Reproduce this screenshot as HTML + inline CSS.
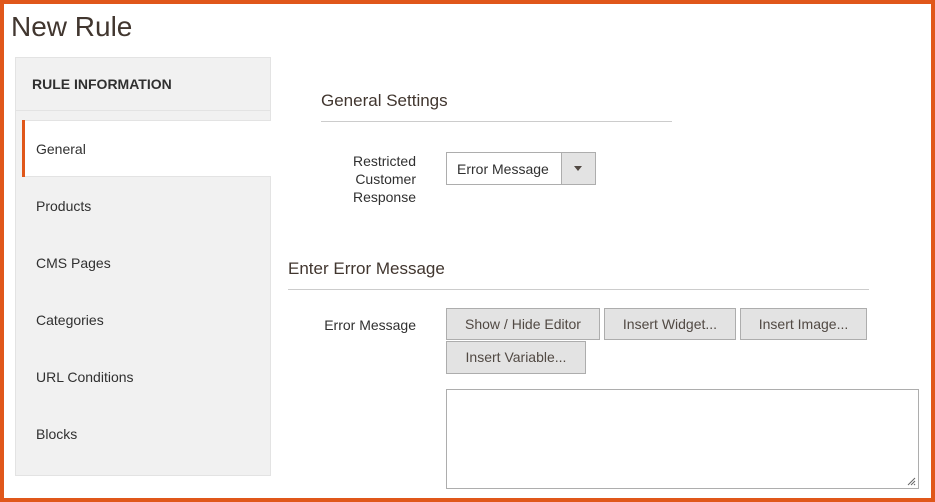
<!DOCTYPE html>
<html><head><style>
*{box-sizing:border-box;margin:0;padding:0}
body{width:935px;height:502px;overflow:hidden;background:#fff;font-family:"Liberation Sans",sans-serif;color:#303030;position:relative}
.frame{position:absolute;left:0;top:0;width:935px;height:502px;border:4px solid #e0571a;z-index:5;pointer-events:none}
.a{position:absolute}
h1{position:absolute;left:11px;top:11px;font-size:28px;font-weight:normal;color:#41362f}
.side{left:15px;top:57px;width:256px;height:419px;background:#f1f1f1;border:1px solid #e3e3e3}
.item{position:absolute;left:36px;font-size:14px;color:#303030}
.btn{position:absolute;height:32px;background:#e3e3e3;border:1px solid #adadad;font-size:14px;color:#514943;text-align:center;line-height:30px}
.lab{position:absolute;font-size:14px;text-align:right;color:#303030}
</style></head><body>
<div class="frame"></div>
<h1>New Rule</h1>
<div class="a side"></div>
<div class="a" style="left:16px;top:110px;width:254px;height:1px;background:#e3e3e3"></div>
<div class="a" style="left:32px;top:76px;font-size:14px;font-weight:bold;color:#303030">RULE INFORMATION</div>
<div class="a" style="left:22px;top:120px;width:249px;height:57px;background:#fff;border-top:1px solid #e3e3e3;border-bottom:1px solid #e3e3e3"></div>
<div class="a" style="left:22px;top:120px;width:3px;height:57px;background:#e0571a"></div>
<div class="item" style="top:141px">General</div>
<div class="item" style="top:198px">Products</div>
<div class="item" style="top:255px">CMS Pages</div>
<div class="item" style="top:312px">Categories</div>
<div class="item" style="top:369px">URL Conditions</div>
<div class="item" style="top:426px">Blocks</div>

<div class="a" style="left:321px;top:91px;font-size:17px;color:#41362f">General Settings</div>
<div class="a" style="left:321px;top:121px;width:351px;height:1px;background:#ccc"></div>
<div class="lab" style="left:300px;width:116px;top:152px;line-height:18px">Restricted<br>Customer<br>Response</div>
<div class="a" style="left:446px;top:152px;width:150px;height:33px;border:1px solid #adadad;background:#fff"></div>
<div class="a" style="left:561px;top:153px;width:34px;height:31px;background:#e3e3e3;border-left:1px solid #adadad"></div>
<div class="a" style="left:574px;top:166px;width:0;height:0;border-left:4px solid transparent;border-right:4px solid transparent;border-top:5px solid #514943"></div>
<div class="a" style="left:457px;top:161px;font-size:14px;color:#303030">Error Message</div>

<div class="a" style="left:288px;top:259px;font-size:17px;color:#41362f">Enter Error Message</div>
<div class="a" style="left:288px;top:289px;width:581px;height:1px;background:#ccc"></div>
<div class="lab" style="left:300px;width:116px;top:317px">Error Message</div>
<div class="btn" style="left:446px;top:308px;width:154px">Show / Hide Editor</div>
<div class="btn" style="left:604px;top:308px;width:132px">Insert Widget...</div>
<div class="btn" style="left:740px;top:308px;width:127px">Insert Image...</div>
<div class="btn" style="left:446px;top:341px;width:140px;height:33px">Insert Variable...</div>
<div class="a" style="left:446px;top:389px;width:473px;height:100px;border:1px solid #adadad;background:#fff"></div>
<svg class="a" style="left:906px;top:476px" width="10" height="10"><path d="M9 2L2 9M9 5L5 9M9 8L8 9" stroke="#666" stroke-width="1"/></svg>
</body></html>
